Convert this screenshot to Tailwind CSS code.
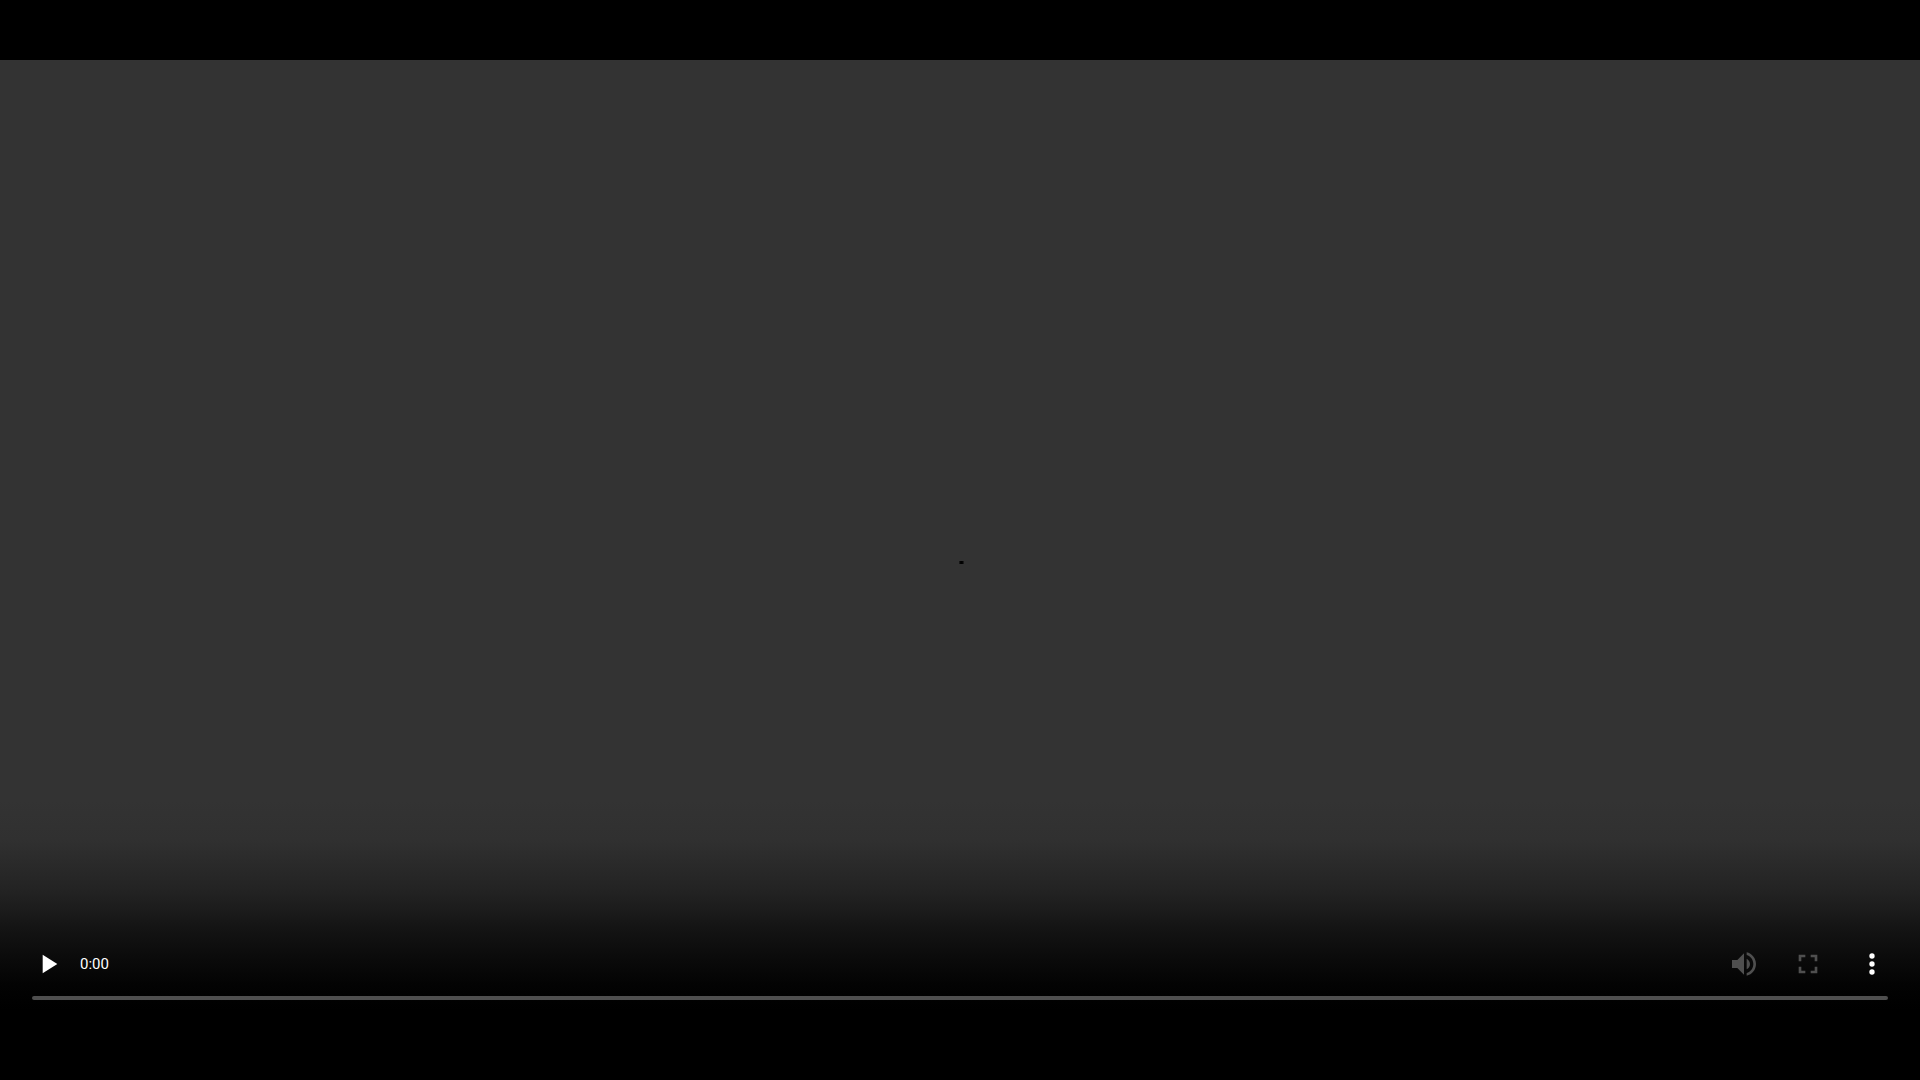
<!DOCTYPE html>
<html lang="en">
<head>
<meta charset="utf-8">
<title>Video</title>
<script src="https://cdn.jsdelivr.net/npm/@tailwindcss/browser@4"></script>
</head>
<body class="flex min-h-screen flex-col bg-black py-[60px] font-['Roboto',sans-serif] text-white">
  <main class="relative flex flex-1 flex-col justify-end bg-[#333333]">
    <div class="absolute top-1/2 left-1/2 mt-[21px] -ml-px h-[3px] w-[5px] bg-linear-to-r from-[#222222] via-black to-[#262626]"></div>
    <div class="flex flex-col bg-[linear-gradient(to_bottom,#33333300_0px,#303030_40px,#2b2b2b_60px,#232323_90px,#1b1b1b_112px,#151515_125px,#0a0a0a_160px,#030303_185px,#000000_210px)] px-8 pt-[148px] pb-5">
      <div class="flex items-center gap-8">
        <button type="button" aria-label="Play" class="size-8">
          <svg viewBox="0 0 24 24" class="size-8" fill="currentColor"><path d="M8 5v14l11-7z"/></svg>
        </button>
        <time class="-ml-4 flex-1 text-[15px]">0:00</time>
        <button type="button" aria-label="Mute" disabled class="size-8 text-[#4f4f4f]">
          <svg viewBox="0 0 24 24" class="size-8" fill="currentColor"><path d="M3 9v6h4l5 5V4L7 9H3zm13.500 3c0-1.770-1.020-3.290-2.500-4.030v8.050c1.480-.730 2.500-2.250 2.500-4.020zM14 3.230v2.060c2.890.860 5 3.540 5 6.710s-2.110 5.850-5 6.710v2.060c4.010-.910 7-4.490 7-8.770s-2.990-7.860-7-8.770z"/></svg>
        </button>
        <button type="button" aria-label="Full screen" disabled class="size-8 text-[#4f4f4f]">
          <svg viewBox="0 0 24 24" class="size-8" fill="currentColor"><path d="M7 14H5v5h5v-2H7v-3zm-2-4h2V7h3V5H5v5zm12 7h-3v2h5v-5h-2v3zM14 5v2h3v3h2V5h-5z"/></svg>
        </button>
        <button type="button" aria-label="More options" class="size-8">
          <svg viewBox="0 0 24 24" class="size-8" fill="currentColor"><circle cx="12" cy="6" r="2"/><circle cx="12" cy="12" r="2"/><circle cx="12" cy="18" r="2"/></svg>
        </button>
      </div>
      <input type="range" aria-label="Playback position" min="0" max="100" value="0" disabled class="mt-4 block h-1 w-full appearance-none rounded-full bg-[#4f4f4f] [&::-webkit-slider-thumb]:size-0 [&::-webkit-slider-thumb]:appearance-none">
    </div>
  </main>
</body>
</html>
